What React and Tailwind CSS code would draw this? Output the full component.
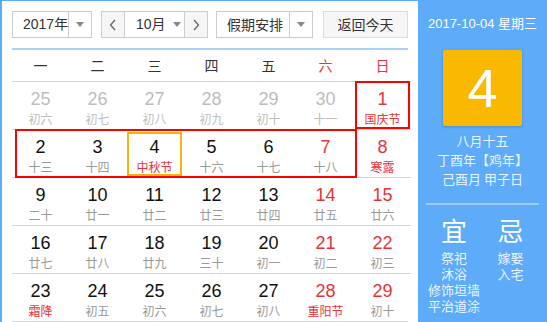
import React from "react";

const font = { fontFamily: '"Liberation Sans", Arial, "Noto Sans CJK SC", sans-serif' };

const rows = [
  [["25","初六","o"],["26","初七","o"],["27","初八","o"],["28","初九","o"],["29","初十","o"],["30","十一","o"],["1","国庆节","rr"]],
  [["2","十三"],["3","十四"],["4","中秋节","fr"],["5","十六"],["6","十七"],["7","十八","w"],["8","寒露","rr"]],
  [["9","二十"],["10","廿一"],["11","廿二"],["12","廿三"],["13","廿四"],["14","廿五","w"],["15","廿六","w"]],
  [["16","廿七"],["17","廿八"],["18","廿九"],["19","三十"],["20","初一"],["21","初二","w"],["22","初三","w"]],
  [["23","霜降","fr"],["24","初五"],["25","初六"],["26","初七"],["27","初八"],["28","重阳节","rr"],["29","初十","w"]],
];

function Cell({ d }) {
  const [n, l, t] = d;
  let nc = "text-[#111]";
  let lc = "text-[#999]";
  if (t === "o") { nc = "text-[#bdbdbd]"; lc = "text-[#bdbdbd]"; }
  if (t === "w") { nc = "text-[#e5343a]"; }
  if (t === "rr") { nc = "text-[#e5343a]"; lc = "text-[#e5343a]"; }
  if (t === "fr") { lc = "text-[#e5343a]"; }
  return (
    <div className="h-[47px] flex flex-col items-center pt-[7px]">
      <div className={`text-[18px] leading-[20px] ${nc}`}>{n}</div>
      <div className={`text-[12px] leading-[16px] mt-[2px] whitespace-nowrap ${lc}`} style={{ fontFamily: '"Noto Sans CJK SC", sans-serif' }}>{l}</div>
    </div>
  );
}

function Arrow() {
  return <div className="w-0 h-0 border-l-[4px] border-r-[4px] border-t-[5px] border-l-transparent border-r-transparent border-t-[#888]" />;
}

export default function App() {
  return (
    <div className="w-[547px] h-[322px] flex bg-white overflow-hidden" style={font}>
      <div className="w-[418px] h-full border-l-2 border-t border-[#5aabf9] pl-[10px] pr-[7px] pt-[10px]">
        <div className="flex h-[27px] text-[14px] text-[#333] whitespace-nowrap" style={{ fontFamily: '"Liberation Sans", "Noto Sans CJK SC", sans-serif' }}>
          <div className="w-[80px] flex border border-[#ccc]">
            <div className="flex-1 flex items-center pl-[10px] whitespace-nowrap">2017年</div>
            <div className="w-[23px] shrink-0 border-l border-[#ccc] flex items-center justify-center"><Arrow /></div>
          </div>
          <div className="ml-[9px] w-[107px] flex border border-[#ccc]">
            <div className="w-[23px] shrink-0 bg-[#f5f5f5] border-r border-[#ccc] flex items-center justify-center text-[#666]">
              <svg width="8" height="12" viewBox="0 0 8 12"><path d="M6 1 L1.5 6 L6 11" fill="none" stroke="#666" strokeWidth="1.3" /></svg>
            </div>
            <div className="flex-1 flex items-center pl-[11px]">10月<span className="ml-[7px]"><Arrow /></span></div>
            <div className="w-[23px] shrink-0 bg-[#f5f5f5] border-l border-[#ccc] flex items-center justify-center">
              <svg width="8" height="12" viewBox="0 0 8 12"><path d="M2 1 L6.5 6 L2 11" fill="none" stroke="#666" strokeWidth="1.3" /></svg>
            </div>
          </div>
          <div className="ml-[8px] w-[97px] flex border border-[#ccc]">
            <div className="flex-1 flex items-center pl-[10px]" style={{ fontFamily: '"Noto Sans CJK SC", sans-serif' }}>假期安排</div>
            <div className="w-[23px] shrink-0 border-l border-[#ccc] flex items-center justify-center"><Arrow /></div>
          </div>
          <div className="ml-[10px] w-[85px] flex items-center justify-center border border-[#ddd] bg-[#f6f6f6]" style={{ fontFamily: '"Noto Sans CJK SC", sans-serif' }}>返回今天</div>
        </div>
        <div className="mt-[10px] h-[2px] bg-[#a9d3fa] w-[396px]" />
        <div className="relative w-[399px]">
          <div className="grid grid-cols-7 h-[31px] items-center text-[14px]" style={{ fontFamily: '"Noto Sans CJK SC", sans-serif' }}>
            {["一","二","三","四","五","六","日"].map((w, i) => (
              <div key={w} className={`text-center ${i >= 5 ? "text-[#e5343a]" : "text-[#333]"}`}>{w}</div>
            ))}
          </div>
          {rows.map((r, i) => (
            <div key={i} className="grid grid-cols-7 border-t border-[#d6d6d6]">
              {r.map((d, j) => <Cell key={j} d={d} />)}
            </div>
          ))}
          <div className="border-t border-[#d6d6d6] w-[396px]" />
          <div className="absolute left-[3px] top-[79px] w-[342px] h-[49px] border-2 border-[#f00]" />
          <div className="absolute left-[343px] top-[31px] w-[55px] h-[48px] border-2 border-[#f00]" />
          <div className="absolute left-[115px] top-[82px] w-[55px] h-[44px] border-2 border-[#f8b310]" />
        </div>
      </div>
      <div className="w-[129px] h-full bg-[#5dabf9] flex flex-col items-center text-white" style={{ fontFamily: '"Liberation Sans", "Noto Sans CJK SC", sans-serif' }}>
        <div className="mt-[15px] text-[13px] leading-[18px] whitespace-nowrap">2017-10-04 星期三</div>
        <div className="mt-[17px] w-[79px] h-[76px] bg-[#fbb800] rounded-[2px] shadow-[0_1px_3px_rgba(0,0,0,0.2)] flex items-center justify-center text-[54px] leading-none">4</div>
        <div className="mt-[5px] text-[13px] leading-[19px] text-center text-[#eaf4ff] whitespace-nowrap" style={{ fontFamily: '"Noto Sans CJK SC", sans-serif' }}>
          <div>八月十五</div>
          <div>丁酉年【鸡年】</div>
          <div>己酉月 甲子日</div>
        </div>
        <div className="mt-[15px] w-[113px] h-[2px] bg-[#9ccbfb]" />
        <div className="w-[113px] flex mt-[10px]" style={{ fontFamily: '"Noto Sans CJK SC", sans-serif' }}>
          <div className="w-[56px] flex flex-col items-center">
            <div className="text-[26px] leading-[30px]">宜</div>
            <div className="mt-[5px] text-[13px] leading-[16px] text-center text-[#eaf4ff] whitespace-nowrap">
              <div>祭祀</div><div>沐浴</div><div>修饰垣墙</div><div>平治道涂</div>
            </div>
          </div>
          <div className="flex-1 flex flex-col items-center">
            <div className="text-[26px] leading-[30px]">忌</div>
            <div className="mt-[5px] text-[13px] leading-[16px] text-center text-[#eaf4ff] whitespace-nowrap">
              <div>嫁娶</div><div>入宅</div>
            </div>
          </div>
        </div>
      </div>
    </div>
  );
}
